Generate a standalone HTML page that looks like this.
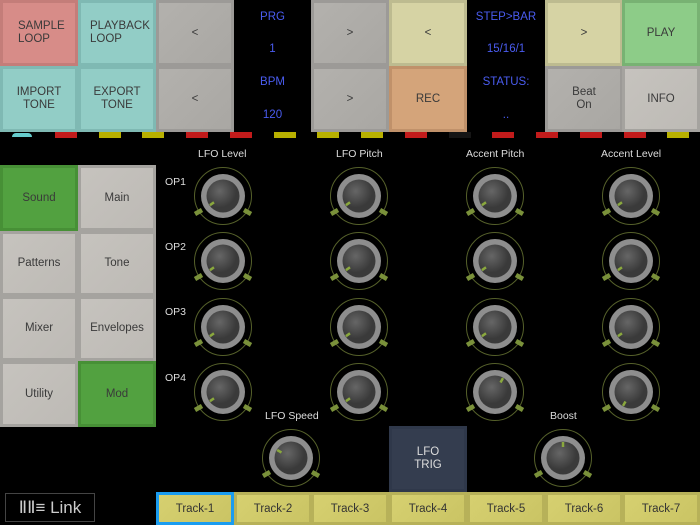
<!DOCTYPE html>
<html><head><meta charset="utf-8"><style>
*{margin:0;padding:0;box-sizing:border-box}
body{width:700px;height:525px;background:#000;position:relative;overflow:hidden;font-family:"Liberation Sans",sans-serif}
.b{position:absolute;display:flex;align-items:center;justify-content:center;text-align:center;font-size:11.5px;color:#3a3a3a;line-height:13px;border:3px solid rgba(0,0,0,0.08)}
.g{background:linear-gradient(135deg,#b3b1ad,#a9a7a3);border-color:#9c9a97}
.lg{background:linear-gradient(135deg,#c6c3be,#bdbab5);border-color:#a5a39f}
.d{position:absolute;background:#000;color:#4a5cf0;font-size:11.5px;text-align:center}
.d div{position:absolute;width:100%}
.ind{position:absolute;top:132px;width:22px;height:6px}
.lab{position:absolute;color:#ddd;font-size:10.5px}
svg.k{position:absolute}
.t{position:absolute;top:492px;height:33px;width:78px;background:linear-gradient(135deg,#d6d070,#cac464);border:3px solid #b7b159;display:flex;align-items:center;justify-content:center;font-size:11.5px;color:#333}
</style></head><body>
<div class="b" style="left:0;top:0;width:78px;height:66px;background:#d78c88;border-color:#c47d79;justify-content:flex-start;padding-left:15px;text-align:left">SAMPLE<br>LOOP</div>
<div class="b" style="left:78px;top:0;width:78px;height:66px;background:#92cdc6;border-color:#7fb9b3;justify-content:flex-start;padding-left:9px;text-align:left">PLAYBACK<br>LOOP</div>
<div class="b g" style="left:156px;top:0;width:78px;height:66px">&lt;</div>
<div class="b g" style="left:311px;top:0;width:78px;height:66px">&gt;</div>
<div class="b" style="left:389px;top:0;width:78px;height:66px;background:#d6d3a4;border-color:#bdbb90">&lt;</div>
<div class="b" style="left:545px;top:0;width:78px;height:66px;background:#d6d3a4;border-color:#bdbb90">&gt;</div>
<div class="b" style="left:622px;top:0;width:78px;height:66px;background:#8dcc88;border-color:#78b273">PLAY</div>
<div class="b" style="left:0;top:66px;width:78px;height:66px;background:#92cdc6;border-color:#7fb9b3">IMPORT<br>TONE</div>
<div class="b" style="left:78px;top:66px;width:78px;height:66px;background:#92cdc6;border-color:#7fb9b3">EXPORT<br>TONE</div>
<div class="b g" style="left:156px;top:66px;width:78px;height:66px">&lt;</div>
<div class="b g" style="left:311px;top:66px;width:78px;height:66px">&gt;</div>
<div class="b" style="left:389px;top:66px;width:78px;height:66px;background:#d4a47a;border-color:#c0916a">REC</div>
<div class="b g" style="left:545px;top:66px;width:78px;height:66px">Beat<br>On</div>
<div class="b lg" style="left:622px;top:66px;width:78px;height:66px">INFO</div>
<div class="d" style="left:234px;top:0;width:77px;height:132px"><div style="top:11px">PRG</div><div style="top:43px">1</div><div style="top:76px">BPM</div><div style="top:109px">120</div></div>
<div class="d" style="left:467px;top:0;width:78px;height:132px"><div style="top:11px">STEP&gt;BAR</div><div style="top:43px">15/16/1</div><div style="top:76px">STATUS:</div><div style="top:109px">..</div></div>
<div style="position:absolute;left:12px;top:133px;width:20px;height:4px;border-radius:10px 10px 0 0;background:#6cc;"></div>
<div id="inds"></div>
<div class="b" style="left:0;top:165px;width:78px;height:66px;background:#52a140;border-color:#479036">Sound</div>
<div class="b lg" style="left:78px;top:165px;width:78px;height:66px">Main</div>
<div class="b lg" style="left:0;top:231px;width:78px;height:65px">Patterns</div>
<div class="b lg" style="left:78px;top:231px;width:78px;height:65px">Tone</div>
<div class="b lg" style="left:0;top:296px;width:78px;height:65px">Mixer</div>
<div class="b lg" style="left:78px;top:296px;width:78px;height:65px">Envelopes</div>
<div class="b lg" style="left:0;top:361px;width:78px;height:66px">Utility</div>
<div class="b" style="left:78px;top:361px;width:78px;height:66px;background:#52a140;border-color:#479036">Mod</div>
<div class="lab" style="left:198px;top:148px">LFO Level</div>
<div class="lab" style="left:336px;top:148px">LFO Pitch</div>
<div class="lab" style="left:466px;top:148px">Accent Pitch</div>
<div class="lab" style="left:601px;top:148px">Accent Level</div>
<div class="lab" style="left:165px;top:176px">OP1</div>
<div class="lab" style="left:165px;top:241px">OP2</div>
<div class="lab" style="left:165px;top:306px">OP3</div>
<div class="lab" style="left:165px;top:372px">OP4</div>
<div class="lab" style="left:265px;top:410px">LFO Speed</div>
<div class="lab" style="left:550px;top:410px">Boost</div>
<div class="b" style="left:389px;top:426px;width:78px;height:66px;background:#343d4f;border-color:#2f384a;color:#ddd">LFO<br>TRIG</div>
<div id="knobs"></div>
<div style="position:absolute;left:5px;top:493px;width:90px;height:29px;border:1px solid #444;color:#ccc;font-size:17px;display:flex;align-items:center;justify-content:center">&#x2161;&#x2161;&#x2261; Link</div>
<div class="t" style="left:156px;border-color:#1a9cf0">Track-1</div>
<div class="t" style="left:234px">Track-2</div>
<div class="t" style="left:311px">Track-3</div>
<div class="t" style="left:389px">Track-4</div>
<div class="t" style="left:467px">Track-5</div>
<div class="t" style="left:545px">Track-6</div>
<div class="t" style="left:622px">Track-7</div>
<script>
var c=["","#c21b1b","#b8b000","#b8b000","#c21b1b","#c21b1b","#b8b000","#b8b000","#b8b000","#c21b1b","#151515","#c21b1b","#c21b1b","#c21b1b","#c21b1b","#b8b000"];
var h="";for(var i=1;i<16;i++)h+='<div class="ind" style="left:'+Math.round(i*43.75+11)+'px;background:'+c[i]+'"></div>';
document.getElementById("inds").innerHTML=h;
function knob(x,y,a){var s='<svg class="k" width="64" height="64" style="left:'+(x-32)+'px;top:'+(y-32)+'px" viewBox="-32 -32 64 64">';
s+='<defs><radialGradient id="r" cx="0.4" cy="0.35"><stop offset="0" stop-color="#666"/><stop offset="1" stop-color="#3a3a3a"/></radialGradient></defs>';
s+='<circle r="28.5" fill="#000" stroke="#55602a" stroke-width="1"/>';
s+='<line x1="-21" y1="14" x2="-28" y2="18" stroke="#7a913a" stroke-width="4.5"/><line x1="21" y1="14" x2="28" y2="18" stroke="#7a913a" stroke-width="4.5"/>';
s+='<circle r="22" fill="#8e8e8e"/><circle r="16.5" fill="url(#r)"/>';
var r=a*Math.PI/180,sx=Math.sin(r),cy=-Math.cos(r);
s+='<line x1="'+(sx*11)+'" y1="'+(cy*11)+'" x2="'+(sx*16)+'" y2="'+(cy*16)+'" stroke="#8aa83e" stroke-width="2.5"/></svg>';return s;}
var xs=[223,359,495,631],ys=[196,261,327,392],h2="";
var ang=[[-125,-125,-125,-125],[-125,-125,-125,-125],[-125,-125,-125,-125],[-125,-125,-125,-125]];
ang[3][2]=30;ang[3][3]=-150;
for(var i=0;i<4;i++)for(var j=0;j<4;j++)h2+=knob(xs[j],ys[i],ang[i][j]);
h2+=knob(291,458,-60)+knob(563,458,0);
document.getElementById("knobs").innerHTML=h2;
</script>
</body></html>
